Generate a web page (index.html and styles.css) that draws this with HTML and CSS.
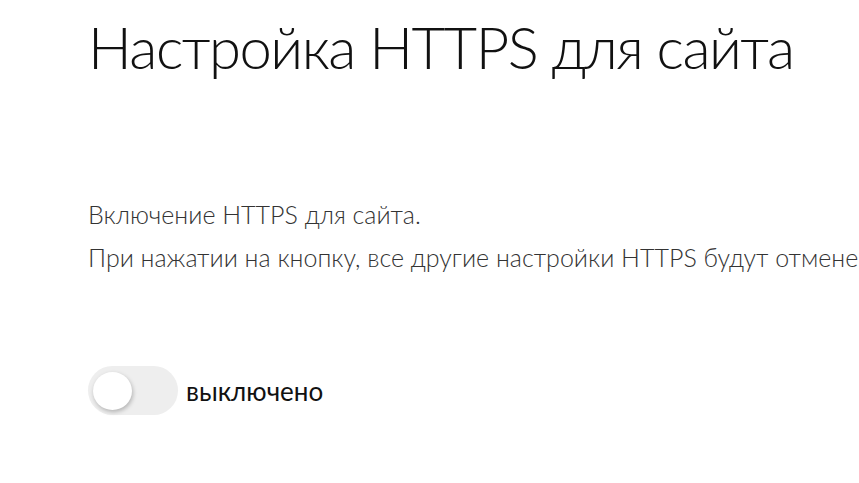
FILE: index.html
```html
<!DOCTYPE html>
<html lang="ru">
<head>
  <meta charset="UTF-8" />
  <meta name="viewport" content="width=device-width, initial-scale=1" />
  <title>Настройка HTTPS для сайта</title>
  <link rel="stylesheet" href="styles.css">
</head>
<body>

<main class="page">
  <h1 class="page-title">Настройка HTTPS для сайта</h1>

  <section class="https-info">
    <p>Включение HTTPS для сайта.</p>
    <p>При нажатии на кнопку, все другие настройки HTTPS будут отменены.</p>
  </section>

  <label class="switch">
    <input type="checkbox" id="https-toggle" />
    <span class="switch-track"><span class="switch-knob"></span></span>
    <span class="switch-label" id="https-state">выключено</span>
  </label>
</main>

<script>
  // Переключение HTTPS: меняем только подпись состояния
  const toggle = document.getElementById('https-toggle');
  const state = document.getElementById('https-state');

  toggle.addEventListener('change', () => {
    state.textContent = toggle.checked ? 'включено' : 'выключено';
  });
</script>

</body>
</html>
```

FILE: styles.css
```css
/* Reset */
* {
  box-sizing: border-box;
}
body {
  font-family: Lato, 'Noto Sans', sans-serif;
  background: #fff;
  margin: 0;
  padding: 0;
  color: #222;
  overflow: hidden;
}
.page {
  padding: 10px 0 0 88px;
  white-space: nowrap;
}
.page-title {
  margin: 0;
  font-size: 58px;
  font-weight: 300;
  line-height: 74px;
  letter-spacing: -1.5px;
  color: #111;
}
.https-info {
  margin-top: 109px;
}
.https-info p {
  margin: 0;
  font-size: 25px;
  font-weight: 300;
  line-height: 43px;
  color: #333;
}
.switch {
  display: inline-flex;
  align-items: center;
  gap: 8px;
  margin-top: 87px;
  cursor: pointer;
}
.switch input {
  display: none;
}
.switch-track {
  position: relative;
  width: 90px;
  height: 49px;
  border-radius: 25px;
  background: #eee;
  transition: background-color 0.3s ease;
}
.switch-knob {
  position: absolute;
  top: 6px;
  left: 5px;
  width: 39px;
  height: 38px;
  border-radius: 50%;
  background: #fff;
  box-shadow: 1px 2px 4px rgba(0,0,0,0.25);
  transition: left 0.3s ease;
}
.switch input:checked + .switch-track {
  background: #4caf50;
}
.switch input:checked + .switch-track .switch-knob {
  left: 46px;
}
.switch-label {
  font-size: 26px;
  font-weight: 400;
  color: #111;
}
```
